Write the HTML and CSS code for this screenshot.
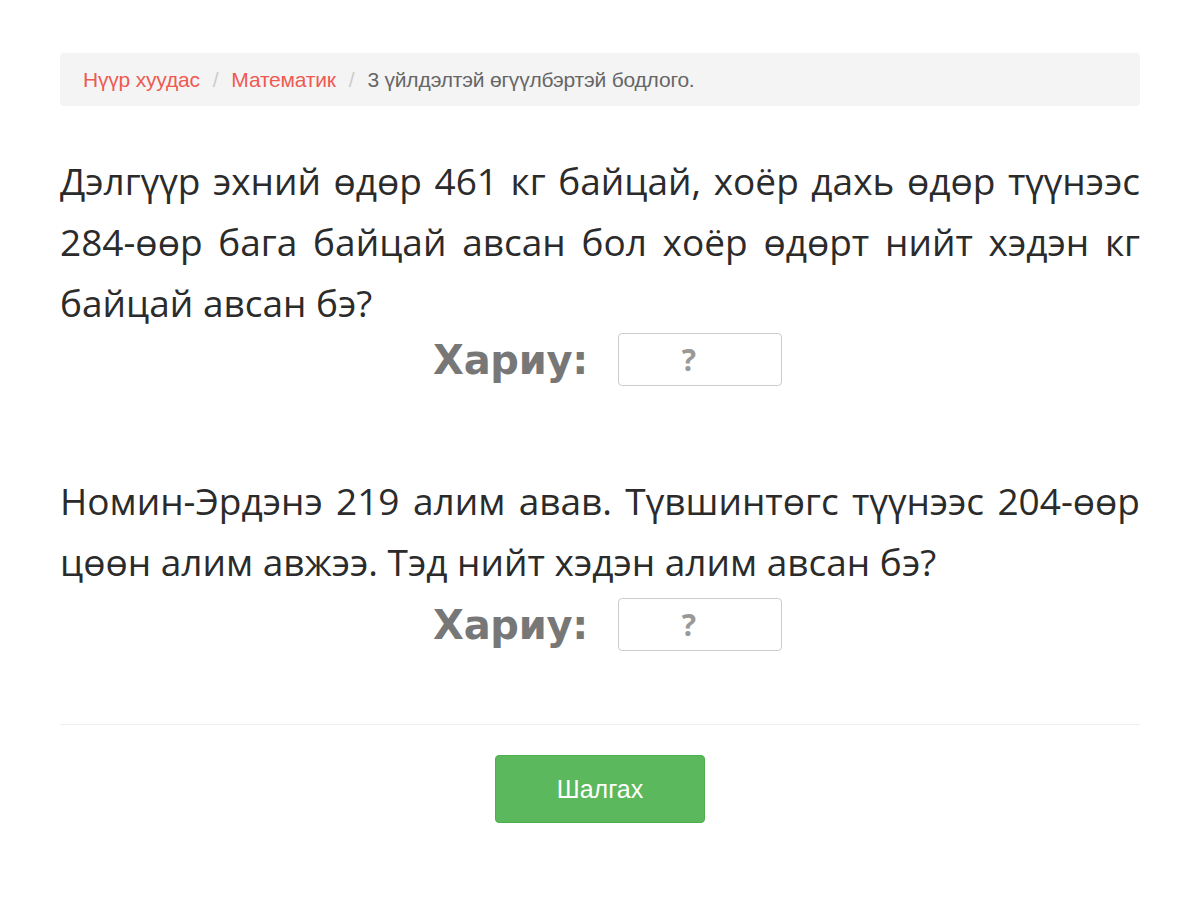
FILE: index.html
```html
<!DOCTYPE html>
<html lang="mn">
<head>
<meta charset="utf-8">
<title>3 үйлдэлтэй өгүүлбэртэй бодлого.</title>
<link rel="stylesheet" href="styles.css">
</head>
<body>
<div class="container">
  <ol class="breadcrumb">
    <li><a href="#">Нүүр хуудас</a></li>
    <li class="sep">/</li>
    <li><a href="#">Математик</a></li>
    <li class="sep">/</li>
    <li class="active">3 үйлдэлтэй өгүүлбэртэй бодлого.</li>
  </ol>

  <div class="problem">
    <p class="question">Дэлгүүр эхний өдөр 461 кг байцай, хоёр дахь өдөр түүнээс 284-өөр бага байцай авсан бол хоёр өдөрт нийт хэдэн кг байцай авсан бэ?</p>
    <div class="answer">
      <span class="label">Хариу:</span>
      <input class="field" type="text" placeholder="?">
    </div>
  </div>

  <div class="problem">
    <p class="question">Номин-Эрдэнэ 219 алим авав. Түвшинтөгс түүнээс 204-өөр цөөн алим авжээ. Тэд нийт хэдэн алим авсан бэ?</p>
    <div class="answer">
      <span class="label">Хариу:</span>
      <input class="field" type="text" placeholder="?">
    </div>
  </div>

  <hr class="divider">
  <div class="actions">
    <button class="btn" type="button">Шалгах</button>
  </div>
</div>
</body>
</html>
```
FILE: styles.css
```css
* { box-sizing: border-box; }
body {
  margin: 0;
  background: #fff;
  font-family: "Liberation Sans", Arial, sans-serif;
  color: #333;
}
.container {
  width: 1080px;
  margin: 0 auto;
  padding-top: 53px;
}
.breadcrumb {
  list-style: none;
  margin: 0;
  height: 53px;
  padding: 0 23px;
  background: #f4f4f4;
  border-radius: 4px;
  display: flex;
  align-items: center;
  font-size: 21px;
  letter-spacing: -0.2px;
}
.breadcrumb li { white-space: nowrap; }
.breadcrumb a { color: #ee5a52; text-decoration: none; }
.breadcrumb .sep { color: #ccc; padding: 0 13px; }
.breadcrumb .active { color: #666; }

.problem { margin-top: 44px; }
.problem + .problem { margin-top: 84px; }
.question {
  margin: 0;
  font-family: "Open Sans", "Noto Sans", sans-serif;
  font-size: 37px;
  line-height: 61px;
  text-align: justify;
  color: #2b2b2b;
}
.answer {
  display: flex;
  justify-content: center;
  align-items: center;
  gap: 30px;
  padding-left: 15px;
}
.problem + .problem .answer { margin-top: 6px; }
.label {
  font-family: "DejaVu Sans", Verdana, sans-serif;
  font-weight: bold;
  font-size: 40px;
  color: #777;
  letter-spacing: -0.3px;
}
.field {
  width: 164px;
  height: 53px;
  padding: 0 22px 0 0;
  border: 1px solid #ccc;
  border-radius: 4px;
  text-align: center;
  font-family: "Open Sans", sans-serif;
  font-weight: bold;
  font-size: 30px;
  color: #555;
  outline: none;
}
.field::placeholder { color: #999; }
.divider {
  margin: 73px 0 30px;
  border: 0;
  border-top: 1px solid #eee;
}
.actions { display: flex; justify-content: center; }
.btn {
  width: 210px;
  height: 68px;
  background: #5cb85c;
  border: 1px solid #4cae4c;
  border-radius: 4px;
  color: #fff;
  font-family: "Liberation Sans", Arial, sans-serif;
  font-size: 25px;
}
```
